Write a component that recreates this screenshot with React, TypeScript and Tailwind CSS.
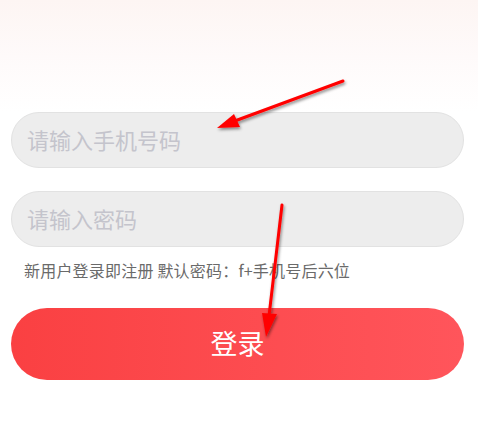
import React from "react";

export default function App() {
  const font = { fontFamily: '"Noto Sans CJK SC", "Noto Sans", sans-serif' };
  return (
    <div className="relative w-[478px] h-[425px] overflow-hidden bg-white" style={font}>
      <div className="h-[112px] bg-gradient-to-b from-[#fdf5f3] via-[#fefafa] to-white" />
      <div className="flex flex-col px-[11px] pr-[14px]">
        <div className="h-[56px] rounded-full bg-[#ededed] border border-[#e2e2e2] flex items-center pl-[15px]">
          <span className="text-[22px] text-[#c4c4cc] leading-none -mt-[3px]">请输入手机号码</span>
        </div>
        <div className="mt-[23px] h-[56px] rounded-full bg-[#ededed] border border-[#e2e2e2] flex items-center pl-[15px]">
          <span className="text-[22px] text-[#c4c4cc] leading-none -mt-[3px]">请输入密码</span>
        </div>
        <div className="mt-[13px] pl-[13px] text-[16px] leading-[20px] tracking-[0.2px] text-[#6a6a6a] whitespace-nowrap">
          新用户登录即注册 默认密码：f+手机号后六位
        </div>
        <div className="mt-[28px] h-[72px] rounded-full bg-gradient-to-r from-[#fa4042] to-[#ff555b] flex items-center justify-center">
          <span className="text-[27px] text-white leading-none -mt-[4px]">登录</span>
        </div>
      </div>
      <svg className="absolute inset-0 pointer-events-none" width="478" height="425" viewBox="0 0 478 425">
        <defs>
          <filter id="sh" x="-20%" y="-20%" width="140%" height="140%">
            <feDropShadow dx="1" dy="2" stdDeviation="1.5" floodColor="#000" floodOpacity="0.45" />
          </filter>
        </defs>
        <g filter="url(#sh)">
          <line x1="343" y1="81" x2="232" y2="122" stroke="#ff0000" strokeWidth="3" strokeLinecap="round" />
          <polygon points="217,128 234,114 240,127" fill="#ff0000" />
          <line x1="282" y1="205" x2="269" y2="316" stroke="#ff0000" strokeWidth="3" strokeLinecap="round" />
          <polygon points="266,337 262,313 277,314" fill="#ff0000" />
        </g>
      </svg>
    </div>
  );
}
